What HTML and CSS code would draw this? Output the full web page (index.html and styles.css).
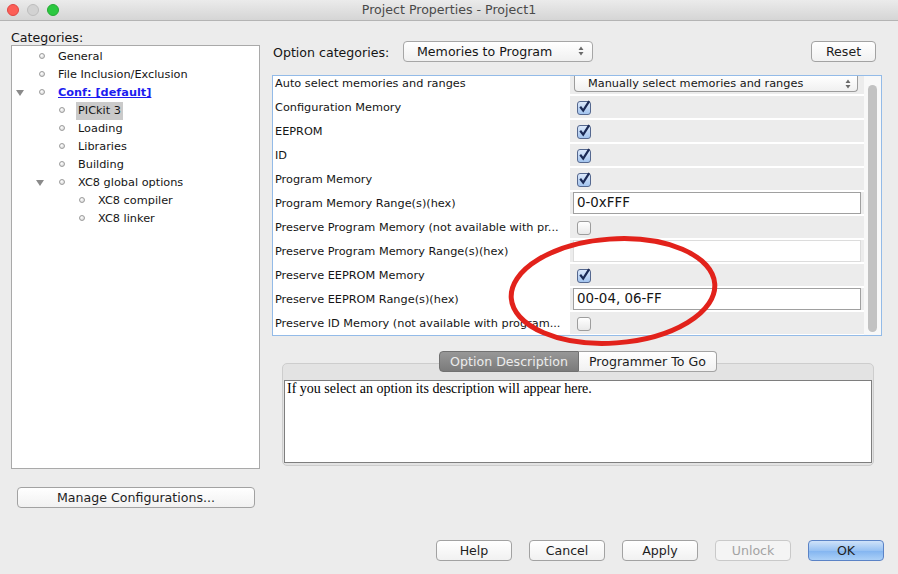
FILE: index.html
```html
<!DOCTYPE html>
<html lang="en">
<head>
  <meta charset="UTF-8">
  <title>Project Properties - Project1</title>
  <link rel="stylesheet" href="styles.css">
</head>
<body>
  <div class="window">
    <div class="titlebar">
      <div class="lights">
        <span class="light red"></span>
        <span class="light gray"></span>
        <span class="light green"></span>
      </div>
      <div class="title">Project Properties - Project1</div>
    </div>

    <div class="main">
      <div class="left">
        <div class="cat-label">Categories:</div>
        <div class="tree">
          <div class="node"><span class="twisty"></span><span class="dot"></span><span class="txt">General</span></div>
          <div class="node"><span class="twisty"></span><span class="dot"></span><span class="txt">File Inclusion/Exclusion</span></div>
          <div class="node"><span class="twisty open"></span><span class="dot"></span><span class="txt conf">Conf: [default]</span></div>
          <div class="node lvl1"><span class="twisty"></span><span class="dot"></span><span class="txt sel">PICkit 3</span></div>
          <div class="node lvl1"><span class="twisty"></span><span class="dot"></span><span class="txt">Loading</span></div>
          <div class="node lvl1"><span class="twisty"></span><span class="dot"></span><span class="txt">Libraries</span></div>
          <div class="node lvl1"><span class="twisty"></span><span class="dot"></span><span class="txt">Building</span></div>
          <div class="node lvl1"><span class="twisty open"></span><span class="dot"></span><span class="txt">XC8 global options</span></div>
          <div class="node lvl2"><span class="twisty"></span><span class="dot"></span><span class="txt">XC8 compiler</span></div>
          <div class="node lvl2"><span class="twisty"></span><span class="dot"></span><span class="txt">XC8 linker</span></div>
        </div>
        <button class="btn manage">Manage Configurations...</button>
      </div>

      <div class="right">
        <div class="opt-row">
          <span class="opt-label">Option categories:</span>
          <div class="select">
            <span>Memories to Program</span>
            <svg class="updown" width="6" height="10" viewBox="0 0 6 10"><path d="M3 0.5 L5.5 4 L0.5 4 Z M3 9.5 L5.5 6 L0.5 6 Z" fill="#6a6a6a"/></svg>
          </div>
          <button class="btn reset">Reset</button>
        </div>

        <div class="props">
          <div class="rows">
            <div class="row first">
              <div class="lbl">Auto select memories and ranges</div>
              <div class="val">
                <div class="combo">
                  <span>Manually select memories and ranges</span>
                  <svg class="updown" width="6" height="10" viewBox="0 0 6 10"><path d="M3 0.5 L5.5 4 L0.5 4 Z M3 9.5 L5.5 6 L0.5 6 Z" fill="#6a6a6a"/></svg>
                </div>
              </div>
            </div>
            <div class="row">
              <div class="lbl">Configuration Memory</div>
              <div class="val"><span class="check on"><svg width="14" height="14" viewBox="0 0 14 14"><path d="M3.2 6.8 L6.2 10.6 L12.2 1.2" fill="none" stroke="#1b2a55" stroke-width="2.2"/></svg></span></div>
            </div>
            <div class="row">
              <div class="lbl">EEPROM</div>
              <div class="val"><span class="check on"><svg width="14" height="14" viewBox="0 0 14 14"><path d="M3.2 6.8 L6.2 10.6 L12.2 1.2" fill="none" stroke="#1b2a55" stroke-width="2.2"/></svg></span></div>
            </div>
            <div class="row">
              <div class="lbl">ID</div>
              <div class="val"><span class="check on"><svg width="14" height="14" viewBox="0 0 14 14"><path d="M3.2 6.8 L6.2 10.6 L12.2 1.2" fill="none" stroke="#1b2a55" stroke-width="2.2"/></svg></span></div>
            </div>
            <div class="row">
              <div class="lbl">Program Memory</div>
              <div class="val"><span class="check on"><svg width="14" height="14" viewBox="0 0 14 14"><path d="M3.2 6.8 L6.2 10.6 L12.2 1.2" fill="none" stroke="#1b2a55" stroke-width="2.2"/></svg></span></div>
            </div>
            <div class="row">
              <div class="lbl">Program Memory Range(s)(hex)</div>
              <div class="val field-cell"><div class="field">0-0xFFF</div></div>
            </div>
            <div class="row">
              <div class="lbl">Preserve Program Memory (not available with pr...</div>
              <div class="val"><span class="check"></span></div>
            </div>
            <div class="row">
              <div class="lbl">Preserve Program Memory Range(s)(hex)</div>
              <div class="val field-cell"><div class="field off"></div></div>
            </div>
            <div class="row">
              <div class="lbl">Preserve EEPROM Memory</div>
              <div class="val"><span class="check on"><svg width="14" height="14" viewBox="0 0 14 14"><path d="M3.2 6.8 L6.2 10.6 L12.2 1.2" fill="none" stroke="#1b2a55" stroke-width="2.2"/></svg></span></div>
            </div>
            <div class="row">
              <div class="lbl">Preserve EEPROM Range(s)(hex)</div>
              <div class="val field-cell"><div class="field">00-04, 06-FF</div></div>
            </div>
            <div class="row">
              <div class="lbl">Preserve ID Memory (not available with program...</div>
              <div class="val"><span class="check"></span></div>
            </div>
          </div>
          <div class="scroll"><div class="thumb"></div></div>
        </div>

        <div class="tabbox">
          <div class="tabs">
            <span class="tab active">Option Description</span>
            <span class="tab">Programmer To Go</span>
          </div>
          <div class="panel">
            <div class="desc">If you select an option its description will appear here.</div>
          </div>
        </div>
      </div>
    </div>

    <div class="footer">
      <button class="btn">Help</button>
      <button class="btn">Cancel</button>
      <button class="btn">Apply</button>
      <button class="btn disabled">Unlock</button>
      <button class="btn ok">OK</button>
    </div>

    <!-- red annotation ring drawn over the form -->
    <svg class="ring" width="240" height="130" viewBox="0 0 240 130">
      <ellipse cx="113" cy="61" rx="102" ry="52" transform="rotate(-4 113 61)" fill="none" stroke="#e2221b" stroke-width="5"/>
    </svg>
  </div>
</body>
</html>
```

FILE: styles.css
```css
body {
  margin: 0;
  font-family: "DejaVu Sans", sans-serif;
  font-size: 12.6px;
  color: #151515;
}
.window {
  position: relative;
  width: 898px;
  height: 574px;
  background: #ececec;
  overflow: hidden;
}

/* title bar */
.titlebar {
  display: grid;
  grid-template-columns: 1fr auto 1fr;
  align-items: center;
  height: 20px;
  background: linear-gradient(#ebebeb, #d5d5d5);
  border-bottom: 1px solid #b4b4b4;
}
.lights {
  display: flex;
  gap: 8px;
  padding-left: 7px;
}
.light {
  width: 10px;
  height: 10px;
  border-radius: 50%;
  border: 1px solid;
}
.light.red { background: #fc5f57; border-color: #df4744; }
.light.gray { background: #d2d2d2; border-color: #bdbdbd; }
.light.green { background: #2bc840; border-color: #25a934; }
.title {
  color: #4a4a4a;
  line-height: 20px;
}

.main {
  display: flex;
  height: 519px;
}

/* left side */
.left {
  width: 249px;
  padding: 9px 0 0 11px;
}
.cat-label {
  line-height: 14px;
  padding-top: 1px;
  margin-bottom: -1px;
}
.tree {
  box-sizing: border-box;
  height: 424px;
  margin-top: 1px;
  padding-top: 2px;
  background: #fff;
  border: 1px solid #a9a9a9;
  font-size: 11.3px;
}
.node {
  display: flex;
  align-items: center;
  height: 18px;
}
.node.lvl1 { padding-left: 20px; }
.node.lvl2 { padding-left: 40px; }
.twisty {
  width: 27px;
  height: 6px;
  position: relative;
}
.twisty.open::before {
  content: "";
  position: absolute;
  left: 4px;
  top: 0;
  border-left: 4.5px solid transparent;
  border-right: 4.5px solid transparent;
  border-top: 6px solid #8a8a8a;
}
.dot {
  box-sizing: border-box;
  width: 6px;
  height: 6px;
  margin-bottom: 3px;
  border-radius: 50%;
  border: 1px solid #9c9c9c;
  background: radial-gradient(circle at 40% 35%, #fff, #cfcfcf);
}
.txt {
  margin-left: 13px;
  line-height: 18px;
}
.txt.conf {
  color: #1c1cf0;
  font-weight: bold;
  text-decoration: underline;
}
.txt.sel {
  margin-left: 11px;
  padding: 0 2px;
  background: #cacaca;
}

.btn {
  box-sizing: border-box;
  height: 21px;
  padding: 0;
  font-family: inherit;
  font-size: 12.6px;
  color: #1e1e1e;
  background: linear-gradient(#ffffff, #f1f1f1);
  border: 1px solid #a2a2a2;
  border-radius: 4px;
}
.manage {
  width: 238px;
  margin: 18px 0 0 6px;
}

/* right side */
.right {
  width: 610px;
  margin-left: 12px;
  padding-top: 19px;
}
.opt-row {
  display: flex;
  align-items: center;
  height: 22px;
}
.opt-label {
  width: 130px;
  padding: 2px 0 0 1px;
}
.select {
  box-sizing: border-box;
  display: flex;
  align-items: center;
  justify-content: space-between;
  width: 190px;
  height: 21px;
  padding: 0 8px 0 13px;
  background: linear-gradient(#ffffff, #f0f0f0);
  border: 1px solid #a6a6a6;
  border-radius: 4px;
}
.reset {
  width: 65px;
  margin-left: auto;
  margin-right: 6px;
}

.props {
  box-sizing: border-box;
  display: flex;
  height: 261px;
  margin-top: 13px;
  background: #fff;
  border: 1px solid #93bbe8;
  font-size: 11.3px;
  overflow: hidden;
}
.rows {
  width: 591px;
}
.row {
  display: grid;
  grid-template-columns: 297px 294px;
  height: 22px;
  margin-top: 2px;
}
.row.first {
  height: 18px;
  margin-top: 0;
}
.lbl {
  padding: 1px 0 0 2px;
  line-height: 22px;
  white-space: nowrap;
  overflow: hidden;
}
.first .lbl {
  line-height: 13px;
}
.val {
  display: flex;
  align-items: center;
  padding-left: 7px;
  background: #ececec;
}
.first .val {
  align-items: flex-start;
  padding-left: 4px;
}
.combo {
  box-sizing: border-box;
  display: flex;
  align-items: center;
  justify-content: space-between;
  width: 284px;
  height: 16px;
  padding: 0 6px 0 13px;
  background: linear-gradient(#ffffff, #f0f0f0);
  border: 1px solid #9c9c9c;
  border-top: none;
  border-radius: 0 0 4px 4px;
}
.check {
  box-sizing: border-box;
  display: block;
  width: 14px;
  height: 14px;
  margin-top: 1px;
  border: 1px solid #9d9d9d;
  border-radius: 3px;
  background: linear-gradient(#ffffff, #e9e9e9);
}
.check svg {
  display: block;
  margin: -2px 0 0 -1px;
}
.check.on {
  border-color: #55688f;
  background: linear-gradient(#dce9fb, #a3c4ee);
}
.val.field-cell {
  padding: 0 3px;
}
.field {
  box-sizing: border-box;
  width: 100%;
  height: 22px;
  padding-left: 3px;
  background: #fff;
  border: 1px solid #a0a0a0;
  font-size: 13.4px;
  line-height: 20px;
}
.field.off {
  border-color: #dcdcdc;
}
.scroll {
  width: 17px;
  background: #f8f8f8;
}
.thumb {
  width: 9px;
  height: 247px;
  margin: 9px 0 0 4px;
  border-radius: 5px;
  background: #c2c2c2;
}

/* description tabs */
.tabbox {
  margin: 15px 8px 0 10px;
}
.tabs {
  position: relative;
  z-index: 1;
  display: flex;
  justify-content: center;
  height: 21px;
}
.tab {
  box-sizing: border-box;
  width: 138px;
  height: 21px;
  line-height: 19px;
  text-align: center;
  color: #1e1e1e;
  background: linear-gradient(#ffffff, #f1f1f1);
  border: 1px solid #a3a3a3;
  border-left: none;
  border-radius: 0 4px 4px 0;
}
.tab.active {
  width: 140px;
  color: #ececec;
  background: linear-gradient(#979797, #7b7b7b);
  border: 1px solid #717171;
  border-radius: 4px 0 0 4px;
}
.panel {
  box-sizing: border-box;
  height: 103px;
  margin-top: -9px;
  padding: 16px 1px 2px 1px;
  background: #e3e3e3;
  border: 1px solid #cdcdcd;
  border-radius: 5px;
}
.desc {
  box-sizing: border-box;
  height: 83px;
  padding-left: 2px;
  background: #fff;
  border: 1px solid #7e7e7e;
  font-family: "Liberation Serif", serif;
  font-size: 14px;
  line-height: 16px;
  color: #000;
}

/* bottom buttons */
.footer {
  display: flex;
  justify-content: flex-end;
  gap: 17px;
  padding-right: 14px;
}
.footer .btn {
  width: 76px;
}
.btn.disabled {
  color: #a3a3a3;
  border-color: #c9c9c9;
  background: #f4f4f4;
}
.btn.ok {
  border-color: #5b83c6;
  background: linear-gradient(#cfe2f9, #98c2f3 50%, #82b4f0 51%, #abd0f7);
}

.ring {
  position: absolute;
  left: 500px;
  top: 230px;
}
```
